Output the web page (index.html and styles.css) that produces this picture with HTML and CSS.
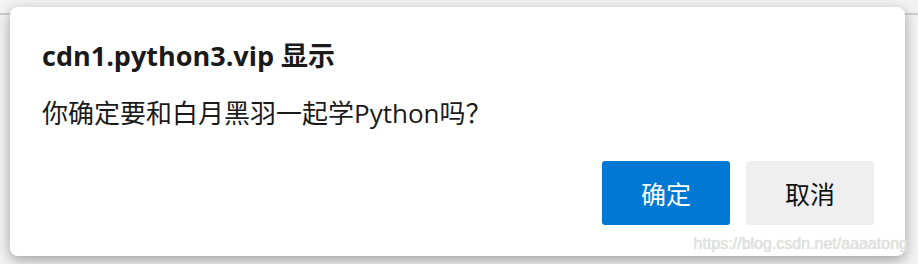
FILE: index.html
```html
<!DOCTYPE html>
<html lang="zh-cn">
<head>
    <meta charset="UTF-8">
    <title>cdn1.python3.vip 显示</title>
    <link rel="stylesheet" href="styles.css">
</head>
<body>
    <div class="page">
        <div class="page-rule"></div>

        <!-- alert dialog -->
        <div class="dialog">
            <div class="dialog-title">cdn1.python3.vip 显示</div>
            <div class="dialog-message">你确定要和白月黑羽一起学Python吗？</div>
            <div class="dialog-buttons">
                <button class="btn btn-primary">确定</button>
                <button class="btn btn-cancel">取消</button>
            </div>
        </div>

        <div class="watermark">https://blog.csdn.net/aaaatong</div>
    </div>
</body>
</html>
```

FILE: styles.css
```css
:root {
    --accent: #0078d4;
    --cancel-bg: #efefef;
    --text: #1a1a1a;
}

body {
    margin: 0;
    background: #f3f3f3;
    font-family: 'Open Sans', 'Noto Sans CJK SC', sans-serif;
}

.page {
    position: relative;
    width: 918px;
    height: 264px;
    padding: 7px 13px 0 10px;
    box-sizing: border-box;
    overflow: hidden;
}

.page-rule {
    position: absolute;
    left: 0;
    right: 0;
    top: 13px;
    height: 2px;
    background: #cfcfcf;
}

.dialog {
    position: relative;
    display: flex;
    flex-direction: column;
    width: 895px;
    height: 249px;
    box-sizing: border-box;
    padding: 31px 31px 31px 32px;
    background: white;
    border-radius: 8px;
    box-shadow: 0 4px 14px rgba(0,0,0,0.35);
    color: var(--text);
}

.dialog-title {
    font-size: 27px;
    font-weight: 700;
    line-height: 36px;
}

.dialog-message {
    margin-top: 21px;
    font-size: 26px;
    line-height: 36px;
}

.dialog-buttons {
    margin-top: auto;
    display: flex;
    justify-content: flex-end;
    gap: 16px;
}

.btn {
    width: 128px;
    height: 64px;
    border: none;
    border-radius: 3px;
    font-family: 'Noto Sans CJK SC', sans-serif;
    font-size: 25px;
    cursor: pointer;
}

.btn-primary {
    background: var(--accent);
    color: white;
}

.btn-cancel {
    background: var(--cancel-bg);
    color: #111;
}

.watermark {
    position: absolute;
    right: 10px;
    top: 235px;
    font-family: 'Liberation Sans', sans-serif;
    font-size: 16px;
    line-height: 18px;
    color: #e2e2e2;
    text-shadow: 0 0 1px #cccccc;
}
```
